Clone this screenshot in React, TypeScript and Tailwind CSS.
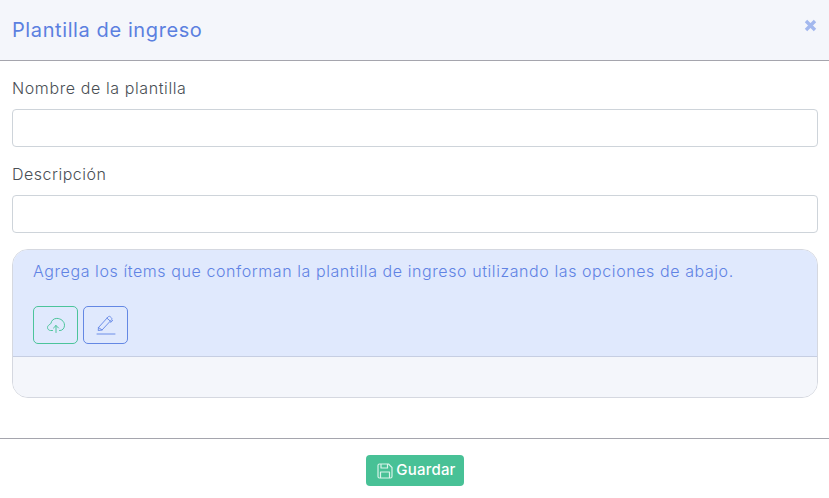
import React from 'react';

const FONT = "font-['Inter','Noto_Sans',sans-serif]";

function CloudUpload() {
  return (
    <svg width="20" height="18" viewBox="0 0 20 18" fill="none" stroke="#4cc49b" strokeWidth="1" strokeLinecap="round" strokeLinejoin="round">
      <path d="M6.5 14.5H4.6C2.9 14.5 1.5 13.2 1.5 11.5C1.5 10.3 2.2 9.4 3.2 9L5 7.2C5.4 4.8 7.4 2.4 10.8 2.4C14.6 2.4 18.5 5.2 18.5 9.2C18.5 12.2 16.5 14.5 14 14.5H13.5" />
      <path d="M10 16.5V9.5M7.5 12L10 9.5L12.5 12" />
    </svg>
  );
}

function PenLine() {
  return (
    <svg width="20" height="20" viewBox="0 0 20 20" fill="none" stroke="#6d8ee8" strokeWidth="1" strokeLinecap="round" strokeLinejoin="round">
      <path d="M2.5 12.5L12.2 1.8C12.8 1.2 13.6 1.2 14.2 1.7L15.4 2.8C16 3.4 16 4.2 15.5 4.8L6 15L2.2 15.5L2.5 12.5Z" />
      <path d="M2.5 12.5L6 15M11 3.2L14.4 6.2M16.6 5.4L14.8 7.4" />
      <path d="M1 19H19" />
    </svg>
  );
}

function SaveIcon() {
  return (
    <svg width="16" height="16" viewBox="0 0 16 16" fill="none" stroke="#d8f3e9" strokeWidth="1.2" strokeLinejoin="round">
      <path d="M1 2.5C1 1.7 1.7 1 2.5 1H11.5L15 4.5V13.5C15 14.3 14.3 15 13.5 15H2.5C1.7 15 1 14.3 1 13.5V2.5Z" />
      <path d="M4 1V5H10.5V1M3.5 15V9H12.5V15" />
    </svg>
  );
}

export default function App() {
  return (
    <div className={`w-[829px] h-[498px] bg-white overflow-hidden ${FONT}`}>
      <div className="h-[61px] bg-[#f4f6fb] border-b border-[#a5a5ad] flex items-center justify-between pl-3 pr-[12px]">
        <h2 className="text-[20px] text-[#5b80e0] tracking-[0.6px]">Plantilla de ingreso</h2>
        <svg width="13" height="13" viewBox="0 0 13 13" className="mb-[10px]">
          <path d="M2 2L11 11M11 2L2 11" stroke="#a3b8ee" strokeWidth="3.4" />
        </svg>
      </div>

      <div className="h-[378px] border-b border-[#a5a5ad] pl-3 pr-[11px] pt-[16px]">
        <label className="block text-[16px] font-light tracking-[0.6px] leading-[22px] text-[#4a4f55] mb-[10px]">Nombre de la plantilla</label>
        <div className="h-[38px] rounded-[4px] border border-[#ced4da] bg-white mb-[16px]" />
        <label className="block text-[16px] font-light tracking-[0.5px] leading-[22px] text-[#4a4f55] mb-[10px]">Descripción</label>
        <div className="h-[38px] rounded-[4px] border border-[#ced4da] bg-white mb-[16px]" />

        <div className="h-[149px] rounded-[16px] border border-[#d5d8e0] overflow-hidden flex flex-col">
          <div className="h-[107px] bg-[#e0e9fd] border-b border-[#c6cee2] pl-5 pt-[10px]">
            <p className="text-[16px] font-light tracking-[0.58px] leading-[22px] text-[#6083e4]">
              Agrega los ítems que conforman la plantilla de ingreso utilizando las opciones de abajo.
            </p>
            <div className="flex gap-[5px] mt-[24px]">
              <button className="w-[45px] h-[38px] rounded-[5px] border border-[#4cc49b] flex items-center justify-center">
                <CloudUpload />
              </button>
              <button className="w-[45px] h-[38px] rounded-[5px] border border-[#6488e4] flex items-center justify-center">
                <PenLine />
              </button>
            </div>
          </div>
          <div className="flex-1 bg-[#f4f6fb]" />
        </div>
      </div>

      <div className="flex justify-center pt-[16px]">
        <button className="w-[98px] h-[31px] rounded-[4px] bg-[#48c196] text-white text-[15px] font-medium tracking-[0.2px] pl-[4px] flex items-center justify-center gap-[3px]">
          <SaveIcon />
          Guardar
        </button>
      </div>
    </div>
  );
}
